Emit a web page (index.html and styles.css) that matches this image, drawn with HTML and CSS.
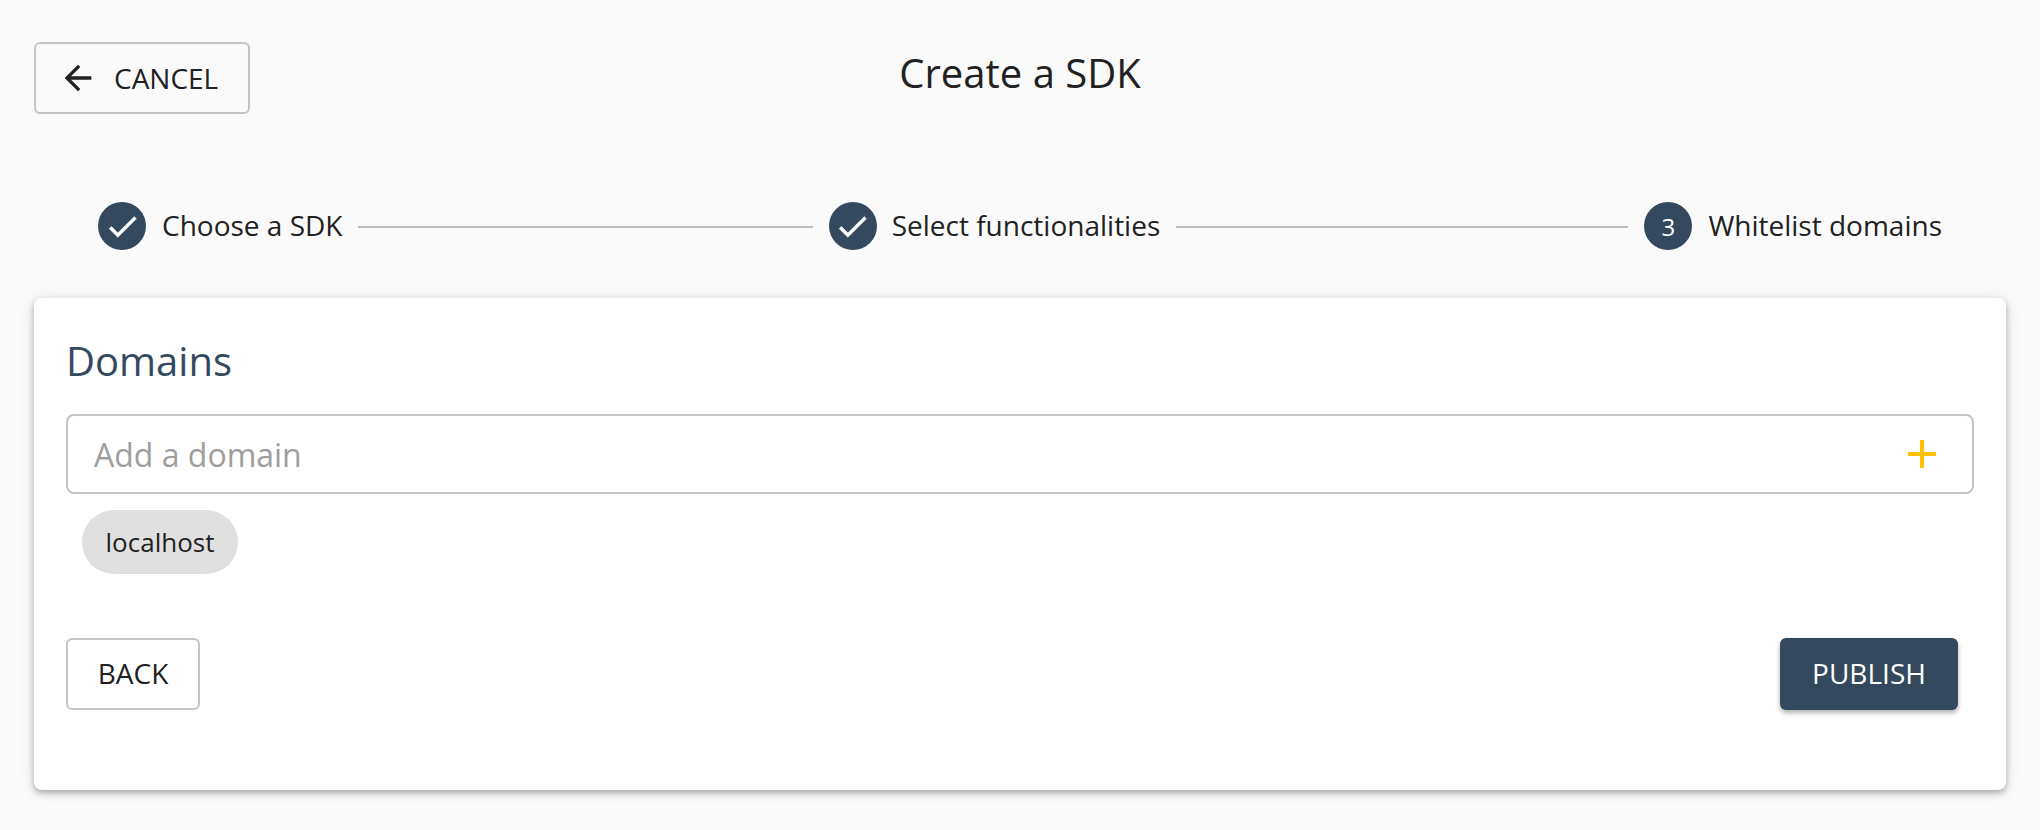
FILE: index.html
```html
<!DOCTYPE html>
<html lang="en">
<head>
<meta charset="utf-8">
<title>Create a SDK</title>
<link rel="stylesheet" href="styles.css">
</head>
<body>
<div class="page">
  <header class="top">
    <button class="btn btn-outline btn-cancel" type="button">
      <svg class="arrow" viewBox="0 0 24 24" width="40" height="40" aria-hidden="true"><path d="M20 11H7.83l5.59-5.59L12 4l-8 8 8 8 1.41-1.41L7.83 13H20v-2z"/></svg>
      <span>CANCEL</span>
    </button>
    <h1 class="title">Create a SDK</h1>
  </header>
  <nav class="stepper">
    <div class="step">
      <span class="step-icon"><svg class="check" viewBox="0 0 24 24" width="37" height="37" aria-hidden="true"><path d="M9 16.2 4.8 12l-1.4 1.4L9 19 21 7l-1.4-1.4z"/></svg></span>
      <span class="step-label">Choose a SDK</span>
    </div>
    <span class="connector connector-wide"></span>
    <div class="step step-tight">
      <span class="step-icon"><svg class="check" viewBox="0 0 24 24" width="37" height="37" aria-hidden="true"><path d="M9 16.2 4.8 12l-1.4 1.4L9 19 21 7l-1.4-1.4z"/></svg></span>
      <span class="step-label">Select functionalities</span>
    </div>
    <span class="connector"></span>
    <div class="step">
      <span class="step-icon">3</span>
      <span class="step-label">Whitelist domains</span>
    </div>
  </nav>
  <main class="card">
    <h2 class="card-title">Domains</h2>
    <div class="field">
      <input class="field-input" type="text" placeholder="Add a domain">
      <svg class="plus" viewBox="0 0 28 28" width="28" height="28" aria-hidden="true"><path d="M12 0h4v12h12v4H16v12h-4V16H0v-4h12z"/></svg>
    </div>
    <div class="chips"><span class="chip">localhost</span></div>
    <div class="actions">
      <button class="btn btn-outline btn-back" type="button">BACK</button>
      <button class="btn btn-primary" type="button">PUBLISH</button>
    </div>
  </main>
</div>
</body>
</html>
```
FILE: styles.css
```css
* { box-sizing: border-box; }
html, body { margin: 0; height: 100%; }
body {
  background: #fafafa;
  color: #212121;
  font-family: "Open Sans", "Noto Sans", sans-serif;
  overflow: hidden;
}
.page { padding: 42px 34px 0; }
.top {
  display: grid;
  grid-template-columns: 1fr auto 1fr;
  height: 71px;
}
.title {
  margin: 0;
  font-size: 40px;
  font-weight: 400;
  line-height: 62px;
}
.btn {
  font-family: inherit;
  font-size: 28px;
  line-height: 40px;
  border-radius: 6px;
  height: 72px;
  cursor: pointer;
}
.btn-outline {
  background: transparent;
  color: #212121;
  border: 2px solid #c4c4c4;
}
.btn-cancel {
  justify-self: start;
  width: 216px;
  height: 72px;
  display: flex;
  align-items: center;
  gap: 16px;
  padding: 0 0 0 22px;
}
.arrow { fill: #212121; flex: none; }
.stepper {
  display: flex;
  align-items: center;
  height: 48px;
  margin-top: 89px;
  padding: 0 64px;
}
.step { display: flex; align-items: center; gap: 16px; flex: none; }
.step-tight { gap: 15px; }
.step-icon {
  width: 48px;
  height: 48px;
  border-radius: 50%;
  background: #35495e;
  color: #fff;
  fill: #fff;
  display: flex;
  align-items: center;
  justify-content: center;
  font-size: 24px;
}
.check { stroke: #fff; stroke-width: 0.4; }
.step-label { font-size: 28px; line-height: 40px; padding-bottom: 2px; }
.connector {
  flex: 1 1 0;
  height: 2px;
  background: #bdbdbd;
  margin: 1px 16px 0;
}
.connector-wide { flex-basis: 2px; }
.card {
  margin-top: 48px;
  height: 492px;
  background: #fff;
  border-radius: 8px;
  box-shadow: 0 3px 6px rgba(0,0,0,.3), 0 1px 18px rgba(0,0,0,.08);
  padding: 0 32px;
}
.card-title {
  margin: 0;
  padding-top: 37px;
  color: #35495e;
  font-size: 40px;
  font-weight: 400;
  line-height: 52px;
}
.field {
  margin-top: 27px;
  height: 80px;
  border: 2px solid #c4c4c4;
  border-radius: 8px;
  display: flex;
  align-items: center;
  padding: 0 36px 0 26px;
}
.field-input {
  flex: 1;
  border: 0;
  outline: 0;
  padding: 0;
  background: transparent;
  font-family: inherit;
  font-size: 32px;
  color: #212121;
}
.field-input::placeholder { color: #9e9e9e; opacity: 1; }
.plus { fill: #ffc107; flex: none; }
.chips { padding: 16px 0 0 16px; display: flex; }
.chip {
  height: 64px;
  width: 156px;
  border-radius: 32px;
  background: #e0e0e0;
  font-size: 26px;
  display: flex;
  align-items: center;
  justify-content: center;
}
.actions {
  margin-top: 64px;
  display: flex;
  justify-content: space-between;
  padding-right: 16px;
}
.btn-back { width: 134px; padding-bottom: 4px; }
.btn-primary {
  width: 178px;
  background: #35495e;
  color: #fff;
  border: 0;
  padding-bottom: 3px;
  box-shadow: 0 3px 5px rgba(0,0,0,.3);
}
```
